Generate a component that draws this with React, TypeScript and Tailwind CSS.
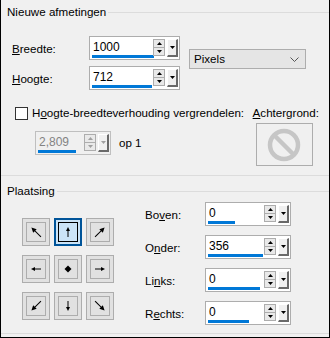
import React from "react";

type Dir = "nw" | "n" | "ne" | "w" | "c" | "e" | "sw" | "s" | "se";

const ANGLE: Record<Exclude<Dir, "c">, number> = {
  n: 0,
  ne: 45,
  e: 90,
  se: 135,
  s: 180,
  sw: 225,
  w: 270,
  nw: 315,
};

function Arrow({ dir }: { dir: Dir }) {
  if (dir === "c") {
    return (
      <svg width="14" height="14" viewBox="0 0 14 14">
        <polygon points="7,3.5 10.5,7 7,10.5 3.5,7" fill="#000" />
      </svg>
    );
  }
  const diag = dir.length === 2;
  return (
    <svg width="14" height="14" viewBox="0 0 14 14">
      <g transform={`rotate(${ANGLE[dir]} 7 7)`}>
        <line x1="7" y1={diag ? 14 : 12} x2="7" y2="4" stroke="#000" strokeWidth="1" />
        <polygon points={diag ? "7,0.5 4.5,5.5 9.5,5.5" : "7,2 5,6 9,6"} fill="#000" />
      </g>
    </svg>
  );
}

function Tri({ up, color = "#000" }: { up?: boolean; color?: string }) {
  return (
    <svg width="5" height="3" viewBox="0 0 5 3">
      <polygon points={up ? "2.5,0 5,3 0,3" : "0,0 5,0 2.5,3"} fill={color} />
    </svg>
  );
}

function Spin({
  value,
  bar,
  width = 91,
  disabled = false,
}: {
  value: string;
  bar: number;
  width?: number;
  disabled?: boolean;
}) {
  const tri = disabled ? "#a0a0a0" : "#000";
  return (
    <div
      className={`flex h-[24px] shrink-0 border ${disabled ? "border-[#bfbfbf] bg-[#f0f0f0]" : "border-[#adadad] bg-white"}`}
      style={{ width }}
    >
      <div className="flex min-w-0 flex-1 flex-col pl-[2px] pr-[1px]">
        <span className={`mt-[3px] h-[14px] pl-[1px] text-[12px] leading-[14px] ${disabled ? "text-[#838383]" : "text-black"}`}>
          {value}
        </span>
        <div className="mt-[1px] h-[3px] bg-[#0078d7]" style={{ width: bar }} />
      </div>
      <div className="mt-[2px] flex h-[17px] w-[12px] flex-col border border-[#adadad] bg-[#e9e9e9]">
        <div className="flex flex-1 items-center justify-center border-b border-[#adadad]">
          <Tri up color={tri} />
        </div>
        <div className="flex flex-1 items-center justify-center">
          <Tri color={tri} />
        </div>
      </div>
      <div className="mt-[2px] mr-[1px] ml-[2px] flex h-[18px] w-[11px] items-center justify-center border-t border-l border-r-2 border-b-2 border-t-white border-l-white border-r-[#696969] border-b-[#696969] bg-[#f0f0f0]">
        <Tri color={tri} />
      </div>
    </div>
  );
}

function Label({ pre, u, post }: { pre?: string; u: string; post: string }) {
  return (
    <span className="whitespace-nowrap text-[11.6px] leading-[16px] text-black">
      {pre}
      <span className="underline underline-offset-1">{u}</span>
      {post}
    </span>
  );
}

function GroupTitle({ children }: { children: React.ReactNode }) {
  return (
    <div className="flex h-[16px] items-center">
      <span className="whitespace-nowrap pl-[6px] pr-[2px] text-[11.6px] leading-[16px] text-black">{children}</span>
      <div className="h-px flex-1 bg-[#dcdcdc]" />
    </div>
  );
}

function PosButton({ dir, selected }: { dir: Dir; selected?: boolean }) {
  return (
    <div
      className={`flex h-[28px] w-[28px] items-center justify-center border ${
        selected ? "border-2 border-[#005499] bg-[#cce4f7]" : "border-[#adadad] bg-[#e1e1e1]"
      }`}
    >
      <div
        className={`flex h-[20px] w-[20px] items-center justify-center border ${
          selected ? "border-black" : "border-[#adadad]"
        }`}
      >
        <Arrow dir={dir} />
      </div>
    </div>
  );
}

const DIRS: Dir[] = ["nw", "n", "ne", "w", "c", "e", "sw", "s", "se"];

const MARGINS = [
  { pre: "Bo", u: "v", post: "en:", value: "0", bar: 27 },
  { pre: "O", u: "n", post: "der:", value: "356", bar: 55 },
  { pre: "Li", u: "n", post: "ks:", value: "0", bar: 52 },
  { pre: "R", u: "e", post: "chts:", value: "0", bar: 41 },
];

export default function App() {
  return (
    <div
      className="h-[338px] w-[330px] overflow-hidden border-r border-b border-l border-black bg-[#f0f0f0] text-black"
      style={{ fontFamily: '"Liberation Sans", Arial, sans-serif' }}
    >
      {/* Nieuwe afmetingen */}
      <div className="h-[176px] border-b border-[#dcdcdc] pt-[4px]">
        <GroupTitle>Nieuwe afmetingen</GroupTitle>

        <div className="mt-[16px] flex items-start">
          <div className="flex flex-col gap-[6px] pl-[11px]">
            <div className="flex items-center">
              <div className="w-[77px]">
                <Label u="B" post="reedte:" />
              </div>
              <Spin value="1000" bar={62} />
            </div>
            <div className="flex items-center">
              <div className="w-[77px]">
                <Label u="H" post="oogte:" />
              </div>
              <Spin value="712" bar={60} />
            </div>
          </div>
          <div className="mt-[13px] ml-[9px] flex h-[20px] w-[117px] items-center justify-between border border-[#adadad] bg-[#e5e5e5] pr-[6px] pl-[4px]">
            <span className="text-[11.6px] leading-[16px]">Pixels</span>
            <svg width="9" height="5" viewBox="0 0 9 5">
              <polyline points="0.5,0.5 4.5,4.5 8.5,0.5" fill="none" stroke="#555" strokeWidth="1" />
            </svg>
          </div>
        </div>

        <div className="mt-[15px] flex">
          <div className="flex flex-col pl-[14px]">
            <div className="flex items-center gap-[4px]">
              <div className="h-[13px] w-[13px] shrink-0 border border-[#333] bg-white" />
              <Label pre="H" u="o" post="ogte-breedteverhouding vergrendelen:" />
            </div>
            <div className="mt-[10px] flex items-center pl-[20px]">
              <Spin value="2,809" bar={38} width={76} disabled />
              <span className="ml-[8px] text-[11.6px] leading-[16px]">op 1</span>
            </div>
          </div>
          <div className="ml-auto flex flex-col items-start pr-[10px]">
            <Label u="A" post="chtergrond:" />
            <div className="mt-[2px] ml-[3px] flex h-[43px] w-[57px] items-center justify-center border border-[#adadad] bg-[#f0f0f0]">
              <svg width="34" height="34" viewBox="0 0 34 34">
                <circle cx="17" cy="17" r="14" fill="none" stroke="#c6c6c6" strokeWidth="4.5" />
                <line x1="7.5" y1="7.5" x2="26.5" y2="26.5" stroke="#c6c6c6" strokeWidth="4.5" />
              </svg>
            </div>
          </div>
        </div>
      </div>

      {/* Plaatsing */}
      <div className="h-[158px] border-b border-[#dcdcdc] pt-[7px]">
        <GroupTitle>Plaatsing</GroupTitle>
        <div className="flex">
          <div className="mt-[19px] ml-[21px] grid grid-cols-[28px_28px_28px] gap-x-[4px] gap-y-[4px]">
            {DIRS.map((d) => (
              <PosButton key={d} dir={d} selected={d === "n"} />
            ))}
          </div>
          <div className="mt-[3px] ml-[31px] flex flex-col gap-[9px]">
            {MARGINS.map((m) => (
              <div key={m.post} className="flex items-center">
                <div className="w-[60px]">
                  <Label pre={m.pre} u={m.u} post={m.post} />
                </div>
                <Spin value={m.value} bar={m.bar} width={86} />
              </div>
            ))}
          </div>
        </div>
      </div>
    </div>
  );
}
